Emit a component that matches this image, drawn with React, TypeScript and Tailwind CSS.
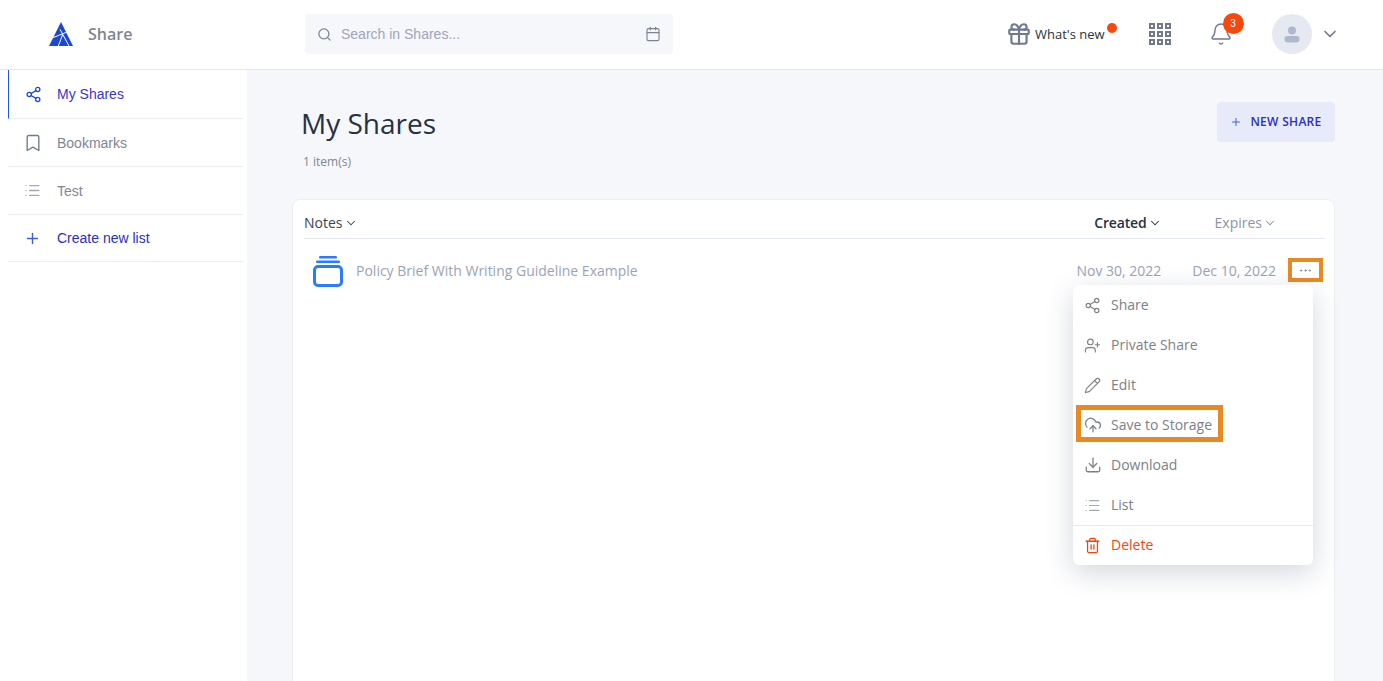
import React from "react";
import { Share2, Bookmark, List, Plus, Search, Calendar, ChevronDown, Gift, Bell, UserPlus, Pencil, CloudUpload, Download, Trash2, MoreHorizontal } from "lucide-react";

const open = "font-['Open_Sans',sans-serif]";
const lib = "font-['Liberation_Sans',Arial,sans-serif]";

function Logo() {
  return (
    <svg width="24" height="24" viewBox="0 0 24 24">
      <path d="M12 0 L24 24 H0 Z" fill="#1a47d6" />
      <path d="M3 16 L19 9.7 M11 7.3 L20 24 M9.3 24 L13.5 13" stroke="#fff" strokeWidth="1" fill="none" />
    </svg>
  );
}

function SideRow({ icon, label, cls, active, h }: { icon: React.ReactNode; label: string; cls: string; active?: boolean; h: string }) {
  return (
    <div className={`flex items-center border-b border-[#e9ecf3] ${h} ${active ? "border-l border-l-[#1a56ee]" : ""}`}>
      <div className={`flex justify-center ${active ? "w-[48px]" : "w-[49px]"}`}>{icon}</div>
      <span className={`${lib} text-sm ${cls}`}>{label}</span>
    </div>
  );
}

function MenuRow({ icon, label, red, divider }: { icon: React.ReactNode; label: string; red?: boolean; divider?: boolean }) {
  return (
    <div className={`flex h-10 items-center pl-[1px] ${open} text-sm ${red ? "text-[#f2450f]" : "text-[#7d8086]"} ${divider ? "border-t border-[#e6e9ef] pb-px" : ""}`}>
      <div className="flex w-[37px] justify-center">{icon}</div>
      <span>{label}</span>
    </div>
  );
}

export default function App() {
  return (
    <div className="flex h-[681px] w-[1383px] flex-col overflow-hidden bg-white">
      <header className="flex h-[70px] shrink-0 items-center border-b border-[#e6e8ee] bg-white pb-px">
        <div className="flex w-[305px] items-center pl-[49px]">
          <Logo />
          <span className={`${open} ml-[15px] text-base font-semibold text-[#7f8694]`}>Share</span>
        </div>
        <div className="flex h-10 w-[368px] items-center rounded bg-[#f5f7fb] px-3">
          <Search size={15} className="text-[#7c8493]" />
          <span className={`${lib} ml-[9px] flex-1 text-sm text-[#a0a6b8]`}>Search in Shares...</span>
          <Calendar size={16} strokeWidth={1.7} className="text-[#7c8493]" />
        </div>
        <div className="ml-[333px] flex items-center">
          <Gift size={26} className="text-[#6f7a8e]" />
          <span className={`${open} relative ml-[3px] pt-px text-[13px] font-medium text-[#2b3240]`}>
            What's new
            <span className="absolute -right-[12px] top-[-1px] h-2.5 w-2.5 rounded-full bg-[#f5480c]" />
          </span>
        </div>
        <div className="ml-[44px] grid grid-cols-3 gap-[2px]">
          {Array.from({ length: 9 }).map((_, i) => (
            <div key={i} className="h-[6px] w-[6px] border-2 border-[#6f7a8e]" />
          ))}
        </div>
        <div className="relative ml-[38px] flex h-6 w-[24px] items-center justify-center">
          <Bell size={24} strokeWidth={1.4} className="text-[#6f7a8e]" />
          <span className={`${lib} absolute left-[14px] top-[-9px] flex h-[21px] w-[21px] items-center justify-center rounded-full bg-[#f5480c] text-[10px] text-white`}>3</span>
        </div>
        <div className="ml-[39px] flex h-10 w-10 items-center justify-center rounded-full bg-[#e6e9f2]">
          <svg width="16" height="17" viewBox="0 0 16 17">
            <circle cx="8" cy="4.5" r="4" fill="#b0b9cc" />
            <rect x="0.5" y="10" width="15" height="6.5" rx="3.2" fill="#b0b9cc" />
          </svg>
        </div>
        <ChevronDown size={20} strokeWidth={2} className="ml-[8px] text-[#6f7a8e]" />
      </header>
      <div className="flex min-h-0 flex-1">
        <aside className="w-[247px] shrink-0 bg-white pl-2 pr-1">
          <SideRow h="h-[49px]" active icon={<Share2 size={17} strokeWidth={1.8} className="text-[#1a47d6]" />} label="My Shares" cls="text-[#3a36d0]" />
          <SideRow h="h-[48px]" icon={<Bookmark size={20} strokeWidth={1.6} className="text-[#6f7a8e]" />} label="Bookmarks" cls="text-[#7f8694]" />
          <SideRow h="h-[48px]" icon={<List size={17} strokeWidth={1.8} className="text-[#a4a9b6]" />} label="Test" cls="text-[#7f8694]" />
          <SideRow h="h-[47px]" icon={<Plus size={17} className="text-[#3b5fd9]" />} label="Create new list" cls="text-[#2a2fc4]" />
        </aside>
        <main className="min-w-0 flex-1 bg-[#f5f7fb] pl-[45px] pr-[48px]">
          <div className="flex h-[129px] items-start justify-between">
            <div className="pl-[9px] pt-[33px]">
              <h1 className={`${open} text-[28px] font-medium leading-[40px] text-[#273142]`}>My Shares</h1>
              <div className={`${open} mt-[11px] pl-[2px] text-xs leading-4 text-[#7f8694]`}>1 item(s)</div>
            </div>
            <button className={`${open} mt-8 flex h-10 w-[118px] items-center justify-center rounded bg-[#e7eaf8] text-xs font-semibold tracking-[0.3px] text-[#2a2fc4]`}>
              <Plus size={12} className="mr-[8px] text-[#4a60c8]" />
              NEW SHARE
            </button>
          </div>
          <section className="relative h-[600px] rounded-t-lg border border-[#eceef4] bg-white pl-[11px] pr-[9px]">
            <div className={`${open} flex h-[39px] items-center border-b border-[#e6e9f4] pt-[8px] text-sm`}>
              <span className="flex items-center text-[#3b4352]">
                Notes
                <ChevronDown size={14} strokeWidth={1.8} className="ml-px" />
              </span>
              <span className="ml-auto flex items-center font-semibold tracking-[-0.15px] text-[#273142]">
                Created
                <ChevronDown size={14} strokeWidth={1.8} className="ml-px" />
              </span>
              <span className="ml-[53px] mr-[48px] flex items-center text-[#8c93a5]">
                Expires
                <ChevronDown size={14} strokeWidth={1.8} className="ml-px" />
              </span>
            </div>
            <div className={`${open} flex h-[63px] items-center text-sm text-[#9ca3b7]`}>
              <svg width="30" height="31" viewBox="0 0 30 31" className="ml-[9px] mr-[13px] mt-[1px] text-[#2b7bff]">
                <rect x="6" y="0" width="18" height="2.6" rx="1.3" fill="currentColor" />
                <rect x="3" y="4.5" width="24" height="2.6" rx="1.3" fill="currentColor" />
                <rect x="1.5" y="10.5" width="27" height="19" rx="3.5" fill="none" stroke="currentColor" strokeWidth="3" />
              </svg>
              <span>Policy Brief With Writing Guideline Example</span>
              <span className="ml-auto">Nov 30, 2022</span>
              <span className="ml-[31px]">Dec 10, 2022</span>
              <div className="-mt-[2px] ml-[12px] mr-[2px] flex h-6 w-[35px] items-center justify-center border-[4px] border-[#e88a24] text-[#7d8086]">
                <MoreHorizontal size={15} strokeWidth={1.5} className="mt-px" />
              </div>
            </div>
            <div className="absolute left-[780px] top-[85px] w-[240px] rounded-md bg-white shadow-[0_8px_28px_rgba(60,75,110,0.22)]">
              <MenuRow icon={<Share2 size={17} strokeWidth={1.6} />} label="Share" />
              <MenuRow icon={<UserPlus size={17} strokeWidth={1.6} />} label="Private Share" />
              <MenuRow icon={<Pencil size={17} strokeWidth={1.6} />} label="Edit" />
              <div className="relative">
                <MenuRow icon={<CloudUpload size={18} strokeWidth={1.7} />} label="Save to Storage" />
                <div className="absolute left-[3px] top-0 h-[37px] w-[147px] border-[5px] border-[#e88a24]" />
              </div>
              <MenuRow icon={<Download size={18} strokeWidth={1.7} />} label="Download" />
              <MenuRow icon={<List size={17} strokeWidth={1.7} className="text-[#a4a9b6]" />} label="List" />
              <MenuRow red divider icon={<Trash2 size={17} strokeWidth={1.8} />} label="Delete" />
            </div>
          </section>
        </main>
      </div>
    </div>
  );
}
